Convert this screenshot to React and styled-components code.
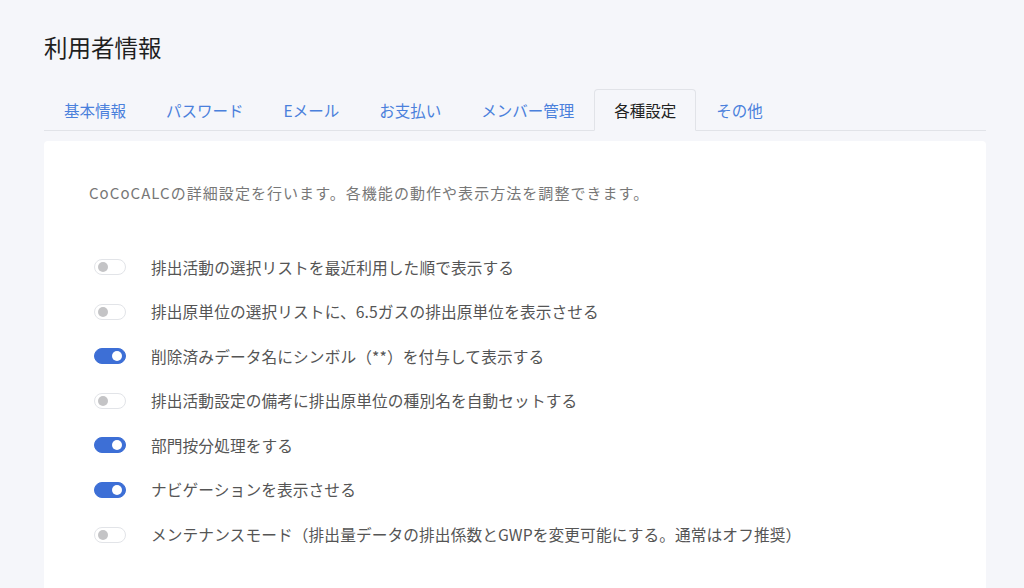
import React, { useState } from "react";
import styled, { createGlobalStyle } from "styled-components";

const GlobalStyle = createGlobalStyle`
  html, body {
    margin: 0;
    padding: 0;
    background: #f5f6fa;
  }
  body {
    font-family: "Noto Sans CJK JP", "Noto Sans", sans-serif;
    color: #222;
  }
`;

const Page = styled.div`
  box-sizing: border-box;
  width: 1024px;
  height: 588px;
  overflow: hidden;
  padding: 30px 38px 0 44px;
  background: #f5f6fa;
`;

const Title = styled.h1`
  margin: 0;
  font-size: 23.5px;
  font-weight: 400;
  line-height: 34px;
  color: #1f1f1f;
`;

const TabBar = styled.div`
  margin-top: 25px;
  display: flex;
  border-bottom: 1px solid #e1e3e8;
`;

const Tab = styled.button`
  height: 42px;
  margin-bottom: -1px;
  padding: 0 19px;
  border: 1px solid ${(p) => (p.$active ? "#e1e3e8" : "transparent")};
  border-bottom-color: ${(p) => (p.$active ? "#f5f6fa" : "transparent")};
  border-radius: 4px 4px 0 0;
  background: ${(p) => (p.$active ? "#f5f6fa" : "transparent")};
  font-family: inherit;
  font-size: 15.5px;
  color: ${(p) => (p.$active ? "#222" : "#4a80dc")};
  cursor: pointer;
`;

const Card = styled.div`
  margin-top: 10px;
  background: #fff;
  border-radius: 4px 4px 0 0;
  padding: 40px 45px 40px;
  height: 460px;
  box-sizing: border-box;
`;

const Intro = styled.p`
  margin: 0 0 50px;
  font-size: 15px;
  letter-spacing: 1.05px;
  line-height: 24px;
  color: #777;
`;

const List = styled.div`
  display: flex;
  flex-direction: column;
  gap: 20.6px;
`;

const Row = styled.label`
  display: flex;
  align-items: center;
  gap: 25px;
  height: 24px;
  cursor: pointer;
`;

const Track = styled.span`
  position: relative;
  flex: none;
  margin-left: 5px;
  width: 32px;
  height: 16px;
  box-sizing: border-box;
  border-radius: 8px;
  border: 1px solid ${(p) => (p.$on ? "#3d6fd6" : "#e2e4e8")};
  background: ${(p) => (p.$on ? "#3d6fd6" : "#fff")};
`;

const Knob = styled.span`
  position: absolute;
  top: 2px;
  left: ${(p) => (p.$on ? "17px" : "3px")};
  width: 10px;
  height: 10px;
  border-radius: 50%;
  background: ${(p) => (p.$on ? "#fff" : "#c4c4c6")};
`;

const Label = styled.span`
  font-size: 15.7px;
  letter-spacing: 0.1px;
  color: #555;
  white-space: nowrap;
`;

const tabs = ["基本情報", "パスワード", "Eメール", "お支払い", "メンバー管理", "各種設定", "その他"];

const initial = [
  { text: "排出活動の選択リストを最近利用した順で表示する", on: false },
  { text: "排出原単位の選択リストに、6.5ガスの排出原単位を表示させる", on: false },
  { text: "削除済みデータ名にシンボル（**）を付与して表示する", on: true },
  { text: "排出活動設定の備考に排出原単位の種別名を自動セットする", on: false },
  { text: "部門按分処理をする", on: true },
  { text: "ナビゲーションを表示させる", on: true },
  { text: "メンテナンスモード（排出量データの排出係数とGWPを変更可能にする。通常はオフ推奨）", on: false },
];

function Toggle({ on, onClick }) {
  return (
    <Track $on={on} onClick={onClick}>
      <Knob $on={on} />
    </Track>
  );
}

export default function App() {
  const [active, setActive] = useState("各種設定");
  const [settings, setSettings] = useState(initial);

  const flip = (i) =>
    setSettings((s) => s.map((item, j) => (j === i ? { ...item, on: !item.on } : item)));

  return (
    <Page>
      <GlobalStyle />
      <Title>利用者情報</Title>
      <TabBar>
        {tabs.map((t) => (
          <Tab key={t} $active={t === active} onClick={() => setActive(t)}>
            {t}
          </Tab>
        ))}
      </TabBar>
      <Card>
        <Intro>CoCoCALCの詳細設定を行います。各機能の動作や表示方法を調整できます。</Intro>
        <List>
          {settings.map((s, i) => (
            <Row key={s.text}>
              <Toggle on={s.on} onClick={() => flip(i)} />
              <Label>{s.text}</Label>
            </Row>
          ))}
        </List>
      </Card>
    </Page>
  );
}
